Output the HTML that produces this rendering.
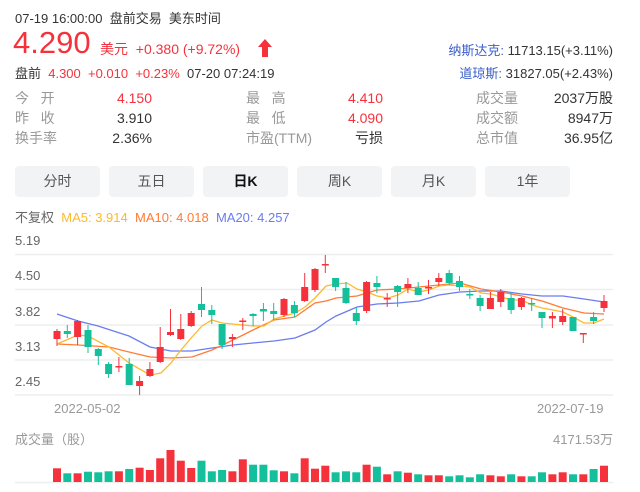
<!DOCTYPE html>
<html><head><meta charset="utf-8"><style>
*{margin:0;padding:0;box-sizing:border-box}
body{width:640px;height:492px;background:#fff;font-family:"Liberation Sans","Noto Sans CJK SC",sans-serif;position:relative;overflow:hidden;color:#333}
.a{position:absolute;white-space:nowrap}
.r{color:#f5323c}.g{color:#999}.b{color:#3a5fc8}
.tab{position:absolute;top:166px;width:85px;height:31px;background:#f2f3f5;border-radius:4px;text-align:center;line-height:31px;font-size:14px;color:#555}
</style></head><body>
<div class="a" style="left:15px;top:8px;font-size:13px">07-19 16:00:00&nbsp; 盘前交易&nbsp; 美东时间</div>
<div class="a r" style="left:13px;top:27px;font-size:31px;line-height:32px">4.290</div>
<div class="a r" style="left:100px;top:39px;font-size:14px">美元&nbsp; +0.380 (+9.72%)</div>
<svg class="a" style="left:257px;top:38px" width="16" height="20"><path d="M8 1 L15 9 L11 9 L11 19 L5 19 L5 9 L1 9 Z" fill="#f5323c"/></svg>
<div class="a" style="right:27px;top:40px;font-size:13px"><span class="b">纳斯达克:</span> 11713.15(+3.11%)</div>
<div class="a" style="left:15px;top:63px;font-size:13px">盘前&nbsp; <span class="r">4.300&nbsp; +0.010&nbsp; +0.23%</span>&nbsp; 07-20 07:24:19</div>
<div class="a" style="right:27px;top:63px;font-size:13px"><span class="b">道琼斯:</span> 31827.05(+2.43%)</div>

<div class="a g" style="left:15px;top:88px;font-size:14px;line-height:20px">今&nbsp;&nbsp; 开<br>昨&nbsp;&nbsp; 收<br>换手率</div>
<div class="a" style="right:488px;top:88px;font-size:14px;line-height:20px;text-align:right"><span class="r">4.150</span><br>3.910<br>2.36%</div>
<div class="a g" style="left:246px;top:88px;font-size:14px;line-height:20px">最&nbsp;&nbsp; 高<br>最&nbsp;&nbsp; 低<br>市盈(TTM)</div>
<div class="a" style="right:257px;top:88px;font-size:14px;line-height:20px;text-align:right"><span class="r">4.410</span><br><span class="r">4.090</span><br>亏损</div>
<div class="a g" style="left:476px;top:88px;font-size:14px;line-height:20px">成交量<br>成交额<br>总市值</div>
<div class="a" style="right:27px;top:88px;font-size:14px;line-height:20px;text-align:right">2037万股<br>8947万<br>36.95亿</div>

<div class="tab" style="left:15px">分时</div>
<div class="tab" style="left:109px">五日</div>
<div class="tab" style="left:203px;color:#111;font-weight:bold">日K</div>
<div class="tab" style="left:297px">周K</div>
<div class="tab" style="left:391px">月K</div>
<div class="tab" style="left:485px">1年</div>

<div class="a" style="left:15px;top:207px;font-size:13px"><span style="color:#666">不复权</span>&nbsp; <span style="color:#fdb92c">MA5: 3.914</span>&nbsp; <span style="color:#ff7b36">MA10: 4.018</span>&nbsp; <span style="color:#6a7cf0">MA20: 4.257</span></div>
<div class="a" style="left:15px;top:223px;font-size:13px;color:#666;line-height:35.3px">5.19<br>4.50<br>3.82<br>3.13<br>2.45</div>
<div class="a g" style="left:54px;top:401px;font-size:13px">2022-05-02</div>
<div class="a g" style="left:537px;top:401px;font-size:13px">2022-07-19</div>
<div class="a g" style="left:15px;top:429px;font-size:13px">成交量（股）</div>
<div class="a g" style="right:27px;top:429px;font-size:13px">4171.53万</div>

<svg class="a" style="left:0;top:0" width="640" height="492">
<g stroke="#eeeeee" stroke-width="1.5">
<line x1="15" y1="254.5" x2="613" y2="254.5"/><line x1="15" y1="289.5" x2="613" y2="289.5"/><line x1="15" y1="325" x2="613" y2="325"/><line x1="15" y1="360" x2="613" y2="360"/><line x1="15" y1="395" x2="613" y2="395"/><line x1="15" y1="482.5" x2="613" y2="482.5"/>
</g>
<g fill="none" stroke-width="1.3">
<polyline stroke="#6a7cf0" points="57,314 78,321 98,326 129,336 150,347 171,351 192,351 212,348 233,345 253,343 274,341 295,338 315,330 326,322 336,316 357,307 377,304 398,303 419,301 439,295 460,292 481,291 501,291 522,294 542,296 563,296 584,299 604,302"/>
<polyline stroke="#ff7b36" points="57,344 78,345 109,347 129,352 150,357 171,358 192,357 212,350 233,340 253,330 274,320 295,317 315,303 326,301 336,298 357,296 377,290 398,289 419,287 439,285 460,283 481,289 501,292 522,296 542,301 563,308 584,313 604,314"/>
<polyline stroke="#fdb92c" points="57,344 78,335 88,336 109,347 129,363 150,375 161,373 171,363 181,350 192,337 202,326 212,320 222,323 243,325 253,326 264,326 274,319 295,313 305,307 315,298 326,286 336,284 347,283 357,289 367,292 377,296 388,298 398,295 408,289 419,292 429,290 439,286 449,285 460,286 470,287 481,293 491,294 501,297 512,300 522,300 532,305 542,308 553,310 563,312 573,317 584,323 594,323 604,319"/>
</g>
<g id="c">
<g fill="#f5323c" stroke="#f5323c"><line x1="57" y1="329" x2="57" y2="346"/><rect x="53.5" y="331" width="7" height="8" stroke="none"/></g>
<g fill="#14c09b" stroke="#14c09b"><line x1="67.3" y1="325" x2="67.3" y2="338"/><rect x="63.8" y="331" width="7" height="3" stroke="none"/></g>
<g fill="#f5323c" stroke="#f5323c"><line x1="77.6" y1="320" x2="77.6" y2="345"/><rect x="74.1" y="321" width="7" height="16" stroke="none"/></g>
<g fill="#14c09b" stroke="#14c09b"><line x1="88" y1="325" x2="88" y2="353"/><rect x="84.5" y="330" width="7" height="17" stroke="none"/></g>
<g fill="#14c09b" stroke="#14c09b"><line x1="98.3" y1="348" x2="98.3" y2="365"/><rect x="94.8" y="349" width="7" height="7" stroke="none"/></g>
<g fill="#14c09b" stroke="#14c09b"><line x1="108.6" y1="362" x2="108.6" y2="378"/><rect x="105.1" y="364" width="7" height="10" stroke="none"/></g>
<g fill="#f5323c" stroke="#f5323c"><line x1="118.9" y1="357" x2="118.9" y2="372"/><rect x="115.4" y="366" width="7" height="1.5" stroke="none"/></g>
<g fill="#14c09b" stroke="#14c09b"><line x1="129.2" y1="358" x2="129.2" y2="385"/><rect x="125.7" y="364" width="7" height="21" stroke="none"/></g>
<g fill="#f5323c" stroke="#f5323c"><line x1="139.6" y1="376" x2="139.6" y2="395"/><rect x="136.1" y="381" width="7" height="5" stroke="none"/></g>
<g fill="#f5323c" stroke="#f5323c"><line x1="149.9" y1="362" x2="149.9" y2="377"/><rect x="146.4" y="369" width="7" height="7" stroke="none"/></g>
<g fill="#f5323c" stroke="#f5323c"><line x1="160.2" y1="327" x2="160.2" y2="363"/><rect x="156.7" y="347" width="7" height="15" stroke="none"/></g>
<g fill="#f5323c" stroke="#f5323c"><line x1="170.5" y1="309" x2="170.5" y2="336"/><rect x="167" y="332" width="7" height="3" stroke="none"/></g>
<g fill="#f5323c" stroke="#f5323c"><line x1="180.8" y1="314" x2="180.8" y2="340"/><rect x="177.3" y="329" width="7" height="10" stroke="none"/></g>
<g fill="#f5323c" stroke="#f5323c"><line x1="191.2" y1="311" x2="191.2" y2="327"/><rect x="187.7" y="313" width="7" height="13" stroke="none"/></g>
<g fill="#14c09b" stroke="#14c09b"><line x1="201.5" y1="287" x2="201.5" y2="317"/><rect x="198" y="304" width="7" height="6" stroke="none"/></g>
<g fill="#14c09b" stroke="#14c09b"><line x1="211.8" y1="305" x2="211.8" y2="324"/><rect x="208.3" y="310" width="7" height="5" stroke="none"/></g>
<g fill="#14c09b" stroke="#14c09b"><line x1="222.1" y1="324" x2="222.1" y2="349"/><rect x="218.6" y="324" width="7" height="21" stroke="none"/></g>
<g fill="#f5323c" stroke="#f5323c"><line x1="232.4" y1="334" x2="232.4" y2="347"/><rect x="228.9" y="337" width="7" height="2" stroke="none"/></g>
<g fill="#f5323c" stroke="#f5323c"><line x1="242.8" y1="318" x2="242.8" y2="330"/><rect x="239.3" y="320.5" width="7" height="1.5" stroke="none"/></g>
<g fill="#14c09b" stroke="#14c09b"><line x1="253.1" y1="313" x2="253.1" y2="326"/><rect x="249.6" y="314" width="7" height="2" stroke="none"/></g>
<g fill="#14c09b" stroke="#14c09b"><line x1="263.4" y1="303" x2="263.4" y2="321"/><rect x="259.9" y="309" width="7" height="2.5" stroke="none"/></g>
<g fill="#14c09b" stroke="#14c09b"><line x1="273.7" y1="303" x2="273.7" y2="320"/><rect x="270.2" y="311" width="7" height="3" stroke="none"/></g>
<g fill="#f5323c" stroke="#f5323c"><line x1="284" y1="298" x2="284" y2="317"/><rect x="280.5" y="299" width="7" height="16" stroke="none"/></g>
<g fill="#14c09b" stroke="#14c09b"><line x1="294.4" y1="301" x2="294.4" y2="317"/><rect x="290.9" y="305" width="7" height="8" stroke="none"/></g>
<g fill="#f5323c" stroke="#f5323c"><line x1="304.7" y1="273" x2="304.7" y2="302"/><rect x="301.2" y="287" width="7" height="14" stroke="none"/></g>
<g fill="#f5323c" stroke="#f5323c"><line x1="315" y1="268" x2="315" y2="292"/><rect x="311.5" y="269" width="7" height="21" stroke="none"/></g>
<g fill="#f5323c" stroke="#f5323c"><line x1="325.3" y1="255" x2="325.3" y2="273"/><rect x="321.8" y="264" width="7" height="1.5" stroke="none"/></g>
<g fill="#14c09b" stroke="#14c09b"><line x1="335.6" y1="278" x2="335.6" y2="291"/><rect x="332.1" y="278" width="7" height="9" stroke="none"/></g>
<g fill="#14c09b" stroke="#14c09b"><line x1="346" y1="282" x2="346" y2="304"/><rect x="342.5" y="288" width="7" height="15" stroke="none"/></g>
<g fill="#14c09b" stroke="#14c09b"><line x1="356.3" y1="307" x2="356.3" y2="325"/><rect x="352.8" y="313" width="7" height="8" stroke="none"/></g>
<g fill="#f5323c" stroke="#f5323c"><line x1="366.6" y1="281" x2="366.6" y2="313"/><rect x="363.1" y="282" width="7" height="29" stroke="none"/></g>
<g fill="#14c09b" stroke="#14c09b"><line x1="376.9" y1="276" x2="376.9" y2="293"/><rect x="373.4" y="283" width="7" height="4" stroke="none"/></g>
<g fill="#f5323c" stroke="#f5323c"><line x1="387.2" y1="293" x2="387.2" y2="307"/><rect x="383.7" y="298" width="7" height="1.5" stroke="none"/></g>
<g fill="#14c09b" stroke="#14c09b"><line x1="397.6" y1="285" x2="397.6" y2="307"/><rect x="394.1" y="286" width="7" height="6" stroke="none"/></g>
<g fill="#f5323c" stroke="#f5323c"><line x1="407.9" y1="278" x2="407.9" y2="293"/><rect x="404.4" y="284" width="7" height="4" stroke="none"/></g>
<g fill="#14c09b" stroke="#14c09b"><line x1="418.2" y1="282" x2="418.2" y2="295"/><rect x="414.7" y="288" width="7" height="7" stroke="none"/></g>
<g fill="#f5323c" stroke="#f5323c"><line x1="428.5" y1="280" x2="428.5" y2="294"/><rect x="425" y="287" width="7" height="1.5" stroke="none"/></g>
<g fill="#f5323c" stroke="#f5323c"><line x1="438.8" y1="273" x2="438.8" y2="286"/><rect x="435.3" y="278" width="7" height="4" stroke="none"/></g>
<g fill="#14c09b" stroke="#14c09b"><line x1="449.2" y1="270" x2="449.2" y2="285"/><rect x="445.7" y="273" width="7" height="10" stroke="none"/></g>
<g fill="#14c09b" stroke="#14c09b"><line x1="459.5" y1="276" x2="459.5" y2="291"/><rect x="456" y="281" width="7" height="6" stroke="none"/></g>
<g fill="#14c09b" stroke="#14c09b"><line x1="469.8" y1="289" x2="469.8" y2="299"/><rect x="466.3" y="294" width="7" height="1.5" stroke="none"/></g>
<g fill="#14c09b" stroke="#14c09b"><line x1="480.1" y1="295" x2="480.1" y2="311"/><rect x="476.6" y="298" width="7" height="8" stroke="none"/></g>
<g fill="#f5323c" stroke="#f5323c"><line x1="490.4" y1="292" x2="490.4" y2="309"/><rect x="486.9" y="298" width="7" height="11" stroke="none"/></g>
<g fill="#f5323c" stroke="#f5323c"><line x1="500.8" y1="289" x2="500.8" y2="307"/><rect x="497.3" y="292" width="7" height="10" stroke="none"/></g>
<g fill="#14c09b" stroke="#14c09b"><line x1="511.1" y1="292" x2="511.1" y2="314"/><rect x="507.6" y="298" width="7" height="12" stroke="none"/></g>
<g fill="#f5323c" stroke="#f5323c"><line x1="521.4" y1="297" x2="521.4" y2="310"/><rect x="517.9" y="298" width="7" height="9" stroke="none"/></g>
<g fill="#14c09b" stroke="#14c09b"><line x1="531.7" y1="298" x2="531.7" y2="311"/><rect x="528.2" y="303" width="7" height="1.5" stroke="none"/></g>
<g fill="#14c09b" stroke="#14c09b"><line x1="542" y1="312" x2="542" y2="328"/><rect x="538.5" y="312" width="7" height="6" stroke="none"/></g>
<g fill="#f5323c" stroke="#f5323c"><line x1="552.4" y1="312" x2="552.4" y2="328"/><rect x="548.9" y="316" width="7" height="2.5" stroke="none"/></g>
<g fill="#f5323c" stroke="#f5323c"><line x1="562.7" y1="309" x2="562.7" y2="325"/><rect x="559.2" y="316" width="7" height="6" stroke="none"/></g>
<g fill="#14c09b" stroke="#14c09b"><line x1="573" y1="317" x2="573" y2="331"/><rect x="569.5" y="317" width="7" height="14" stroke="none"/></g>
<g fill="#f5323c" stroke="#f5323c"><line x1="583.3" y1="333" x2="583.3" y2="343"/><rect x="579.8" y="333" width="7" height="1.5" stroke="none"/></g>
<g fill="#14c09b" stroke="#14c09b"><line x1="593.6" y1="312" x2="593.6" y2="324"/><rect x="590.1" y="317" width="7" height="4" stroke="none"/></g>
<g fill="#f5323c" stroke="#f5323c"><line x1="604" y1="295" x2="604" y2="312"/><rect x="600.5" y="301" width="7" height="7" stroke="none"/></g>
</g>
<g>
<rect x="53" y="468.3" width="8" height="13.7" fill="#f5323c"/>
<rect x="63.3" y="473.3" width="8" height="8.7" fill="#14c09b"/>
<rect x="73.6" y="473.3" width="8" height="8.7" fill="#f5323c"/>
<rect x="84" y="471.7" width="8" height="10.3" fill="#14c09b"/>
<rect x="94.3" y="472.3" width="8" height="9.7" fill="#14c09b"/>
<rect x="104.6" y="471.3" width="8" height="10.7" fill="#14c09b"/>
<rect x="114.9" y="471.3" width="8" height="10.7" fill="#f5323c"/>
<rect x="125.2" y="469" width="8" height="13" fill="#14c09b"/>
<rect x="135.6" y="467.7" width="8" height="14.3" fill="#f5323c"/>
<rect x="145.9" y="470" width="8" height="12" fill="#f5323c"/>
<rect x="156.2" y="458.3" width="8" height="23.7" fill="#f5323c"/>
<rect x="166.5" y="450" width="8" height="32" fill="#f5323c"/>
<rect x="176.8" y="460.7" width="8" height="21.3" fill="#f5323c"/>
<rect x="187.2" y="468" width="8" height="14" fill="#f5323c"/>
<rect x="197.5" y="460.7" width="8" height="21.3" fill="#14c09b"/>
<rect x="207.8" y="471.3" width="8" height="10.7" fill="#14c09b"/>
<rect x="218.1" y="470" width="8" height="12" fill="#14c09b"/>
<rect x="228.4" y="471.3" width="8" height="10.7" fill="#f5323c"/>
<rect x="238.8" y="459.3" width="8" height="22.7" fill="#f5323c"/>
<rect x="249.1" y="464.7" width="8" height="17.3" fill="#14c09b"/>
<rect x="259.4" y="464.7" width="8" height="17.3" fill="#14c09b"/>
<rect x="269.7" y="470.3" width="8" height="11.7" fill="#14c09b"/>
<rect x="280" y="471.3" width="8" height="10.7" fill="#f5323c"/>
<rect x="290.4" y="473.3" width="8" height="8.7" fill="#14c09b"/>
<rect x="300.7" y="458.3" width="8" height="23.7" fill="#f5323c"/>
<rect x="311" y="468.7" width="8" height="13.3" fill="#f5323c"/>
<rect x="321.3" y="465.7" width="8" height="16.3" fill="#f5323c"/>
<rect x="331.6" y="472.3" width="8" height="9.7" fill="#14c09b"/>
<rect x="342" y="471.3" width="8" height="10.7" fill="#14c09b"/>
<rect x="352.3" y="472.3" width="8" height="9.7" fill="#14c09b"/>
<rect x="362.6" y="464.7" width="8" height="17.3" fill="#f5323c"/>
<rect x="372.9" y="466.7" width="8" height="15.3" fill="#14c09b"/>
<rect x="383.2" y="474.3" width="8" height="7.7" fill="#f5323c"/>
<rect x="393.6" y="471.3" width="8" height="10.7" fill="#14c09b"/>
<rect x="403.9" y="472.7" width="8" height="9.3" fill="#f5323c"/>
<rect x="414.2" y="474.3" width="8" height="7.7" fill="#14c09b"/>
<rect x="424.5" y="475.3" width="8" height="6.7" fill="#f5323c"/>
<rect x="434.8" y="475.3" width="8" height="6.7" fill="#f5323c"/>
<rect x="445.2" y="476.3" width="8" height="5.7" fill="#14c09b"/>
<rect x="455.5" y="475.3" width="8" height="6.7" fill="#14c09b"/>
<rect x="465.8" y="477.3" width="8" height="4.7" fill="#14c09b"/>
<rect x="476.1" y="474.3" width="8" height="7.7" fill="#14c09b"/>
<rect x="486.4" y="475.3" width="8" height="6.7" fill="#f5323c"/>
<rect x="496.8" y="476.3" width="8" height="5.7" fill="#f5323c"/>
<rect x="507.1" y="474.3" width="8" height="7.7" fill="#14c09b"/>
<rect x="517.4" y="476.3" width="8" height="5.7" fill="#f5323c"/>
<rect x="527.7" y="476.3" width="8" height="5.7" fill="#14c09b"/>
<rect x="538" y="472.3" width="8" height="9.7" fill="#14c09b"/>
<rect x="548.4" y="474.3" width="8" height="7.7" fill="#f5323c"/>
<rect x="558.7" y="472.3" width="8" height="9.7" fill="#f5323c"/>
<rect x="569" y="474.3" width="8" height="7.7" fill="#14c09b"/>
<rect x="579.3" y="474.3" width="8" height="7.7" fill="#f5323c"/>
<rect x="589.6" y="469" width="8" height="13" fill="#14c09b"/>
<rect x="600" y="465.7" width="8" height="16.3" fill="#f5323c"/>
</g>
</svg>
</body></html>
